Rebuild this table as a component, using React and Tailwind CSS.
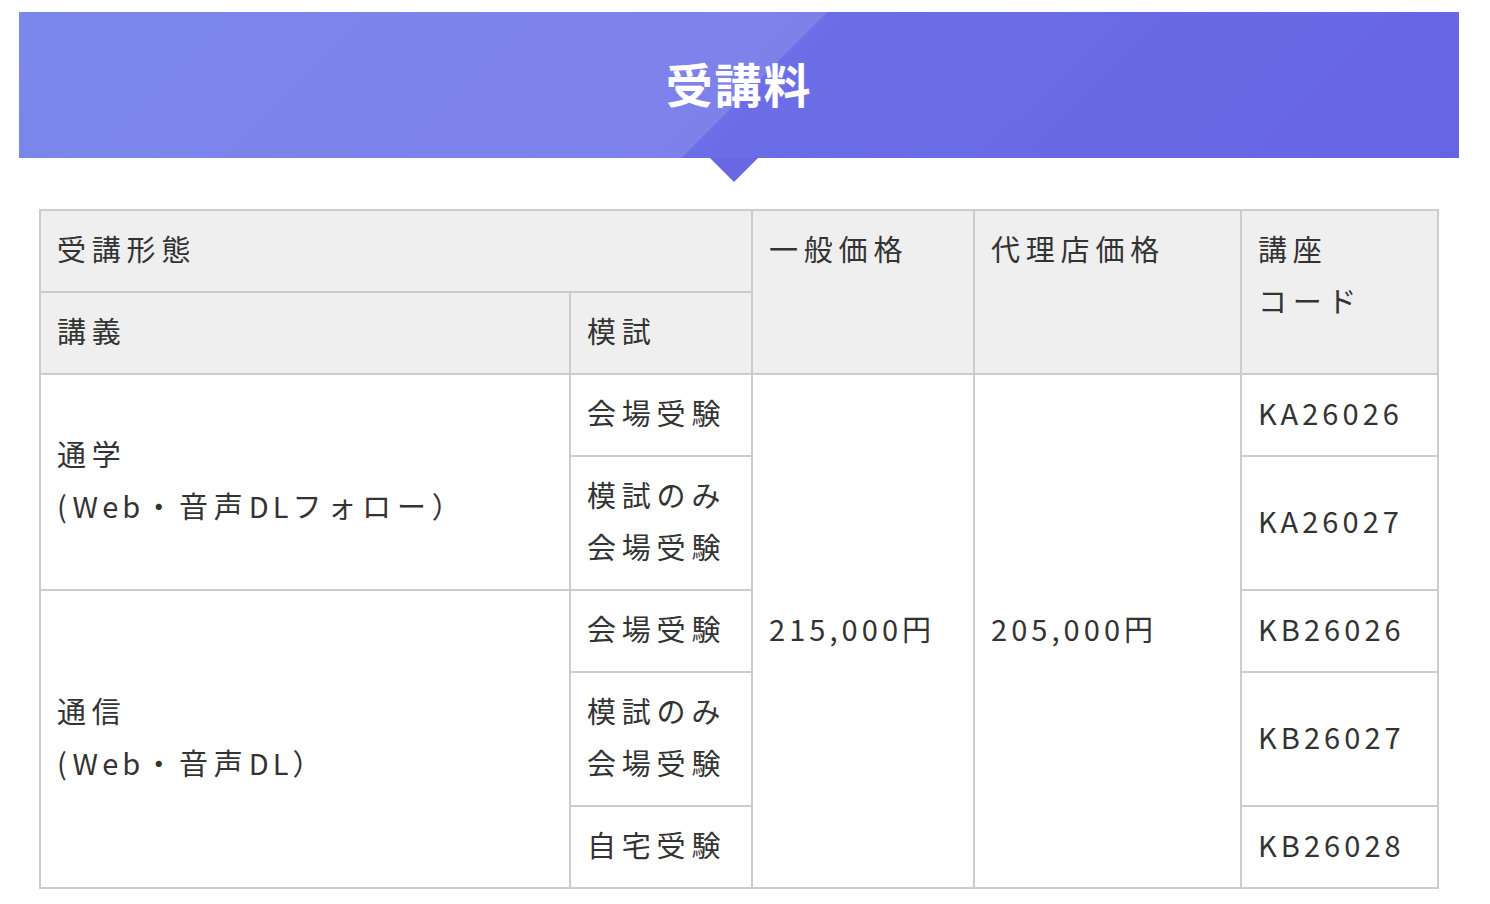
import React from 'react';

const cell = 'border-2 border-[#cccccc] px-[16px] pt-[11px] pb-[17px] align-middle text-left font-normal';
const head = 'border-2 border-[#cccccc] px-[16px] pt-[11px] pb-[17px] align-top text-left font-normal bg-[#efefef]';
const latin = 'tracking-[0.14em]';

const App = () => {
  return (
    <div className="min-h-screen bg-white pt-[12px] px-[19px] font-['Noto_Sans_CJK_JP',sans-serif] text-[#333333]">
      {/* Title banner */}
      <div className="relative w-[1440px] h-[146px] flex items-center justify-center pb-[6px] bg-[linear-gradient(135deg,#7a87eb_0%,#7e81ea_51%,#6b6ee6_51%,#6764e4_100%)]">
        <h2 className="text-white text-[47px] font-bold tracking-[0.04em] leading-none">受講料</h2>
        <div className="absolute left-[691px] top-full w-0 h-0 border-l-[24px] border-r-[24px] border-t-[24px] border-l-transparent border-r-transparent border-t-[#6a67e4]" />
      </div>

      {/* Fee table */}
      <div className="px-[20px] pt-[51px]">
        <table className="w-[1398px] table-fixed border-collapse text-[29px] leading-[52px] tracking-[0.2em]">
          <colgroup>
            <col className="w-[530px]" />
            <col className="w-[182px]" />
            <col className="w-[222px]" />
            <col className="w-[267px]" />
            <col className="w-[197px]" />
          </colgroup>
          <thead>
            <tr>
              <th colSpan={2} className={head}>受講形態</th>
              <th rowSpan={2} className={head}>一般価格</th>
              <th rowSpan={2} className={head}>代理店価格</th>
              <th rowSpan={2} className={head}>講座<br />コード</th>
            </tr>
            <tr>
              <th className={head}>講義</th>
              <th className={head}>模試</th>
            </tr>
          </thead>
          <tbody>
            <tr>
              <td rowSpan={2} className={cell}>通学<br />(<span className={latin}>Web</span>・音声<span className={latin}>DL</span>フォロー）</td>
              <td className={cell}>会場受験</td>
              <td rowSpan={5} className={cell}><span className={latin}>215,000</span>円</td>
              <td rowSpan={5} className={cell}><span className={latin}>205,000</span>円</td>
              <td className={cell}><span className={latin}>KA26026</span></td>
            </tr>
            <tr>
              <td className={cell}>模試のみ<br />会場受験</td>
              <td className={cell}><span className={latin}>KA26027</span></td>
            </tr>
            <tr>
              <td rowSpan={3} className={cell}>通信<br />(<span className={latin}>Web</span>・音声<span className={latin}>DL</span>）</td>
              <td className={cell}>会場受験</td>
              <td className={cell}><span className={latin}>KB26026</span></td>
            </tr>
            <tr>
              <td className={cell}>模試のみ<br />会場受験</td>
              <td className={cell}><span className={latin}>KB26027</span></td>
            </tr>
            <tr>
              <td className={cell}>自宅受験</td>
              <td className={cell}><span className={latin}>KB26028</span></td>
            </tr>
          </tbody>
        </table>
      </div>
    </div>
  );
};

export default App;
